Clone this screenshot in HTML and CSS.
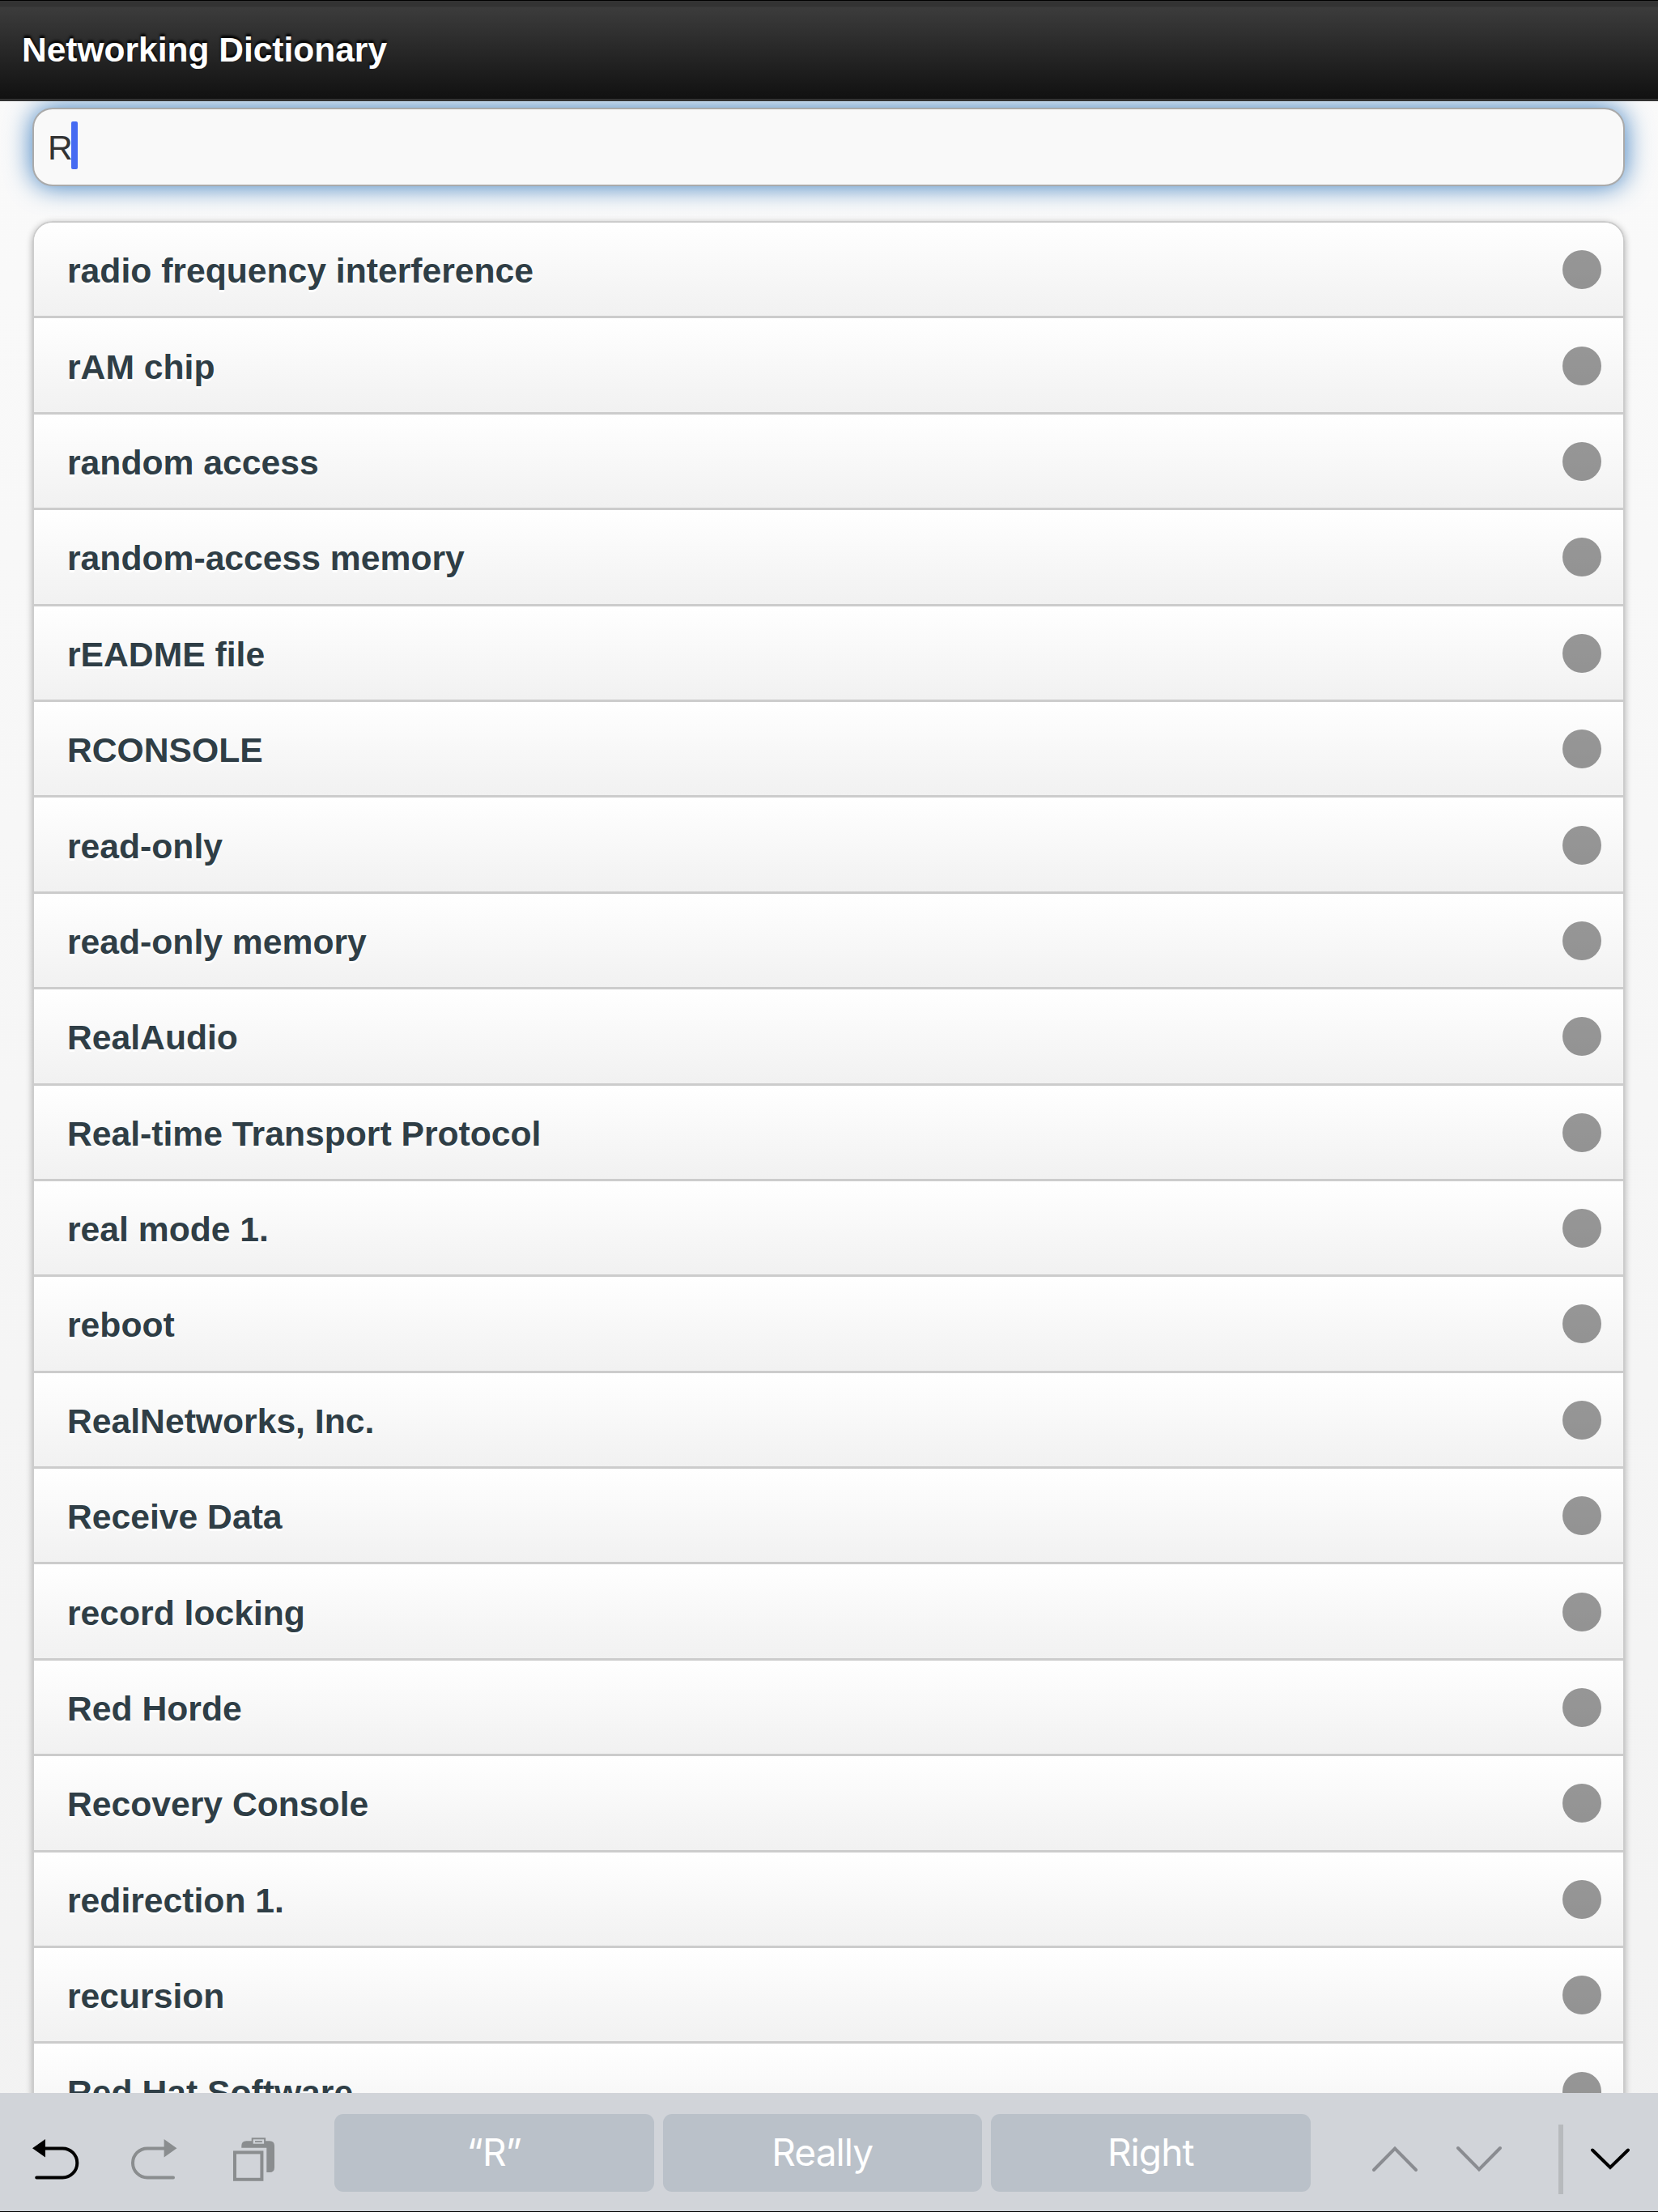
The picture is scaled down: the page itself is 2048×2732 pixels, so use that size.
FILE: index.html
```html
<!DOCTYPE html>
<html lang="en">
<head>
    <meta charset="UTF-8">
    <meta name="viewport" content="width=device-width, initial-scale=1.0">
    <title>Networking Dictionary</title>
    <link rel="stylesheet" href="styles.css">
</head>
<body>

    <header class="header">
        <h1>Networking Dictionary</h1>
    </header>

    <main class="content">
        <div class="search"><span>R</span><i class="caret"></i></div>

        <ul class="list">
            <li><a>radio frequency interference</a><span class="dot"></span></li>
            <li><a>rAM chip</a><span class="dot"></span></li>
            <li><a>random access</a><span class="dot"></span></li>
            <li><a>random-access memory</a><span class="dot"></span></li>
            <li><a>rEADME file</a><span class="dot"></span></li>
            <li><a>RCONSOLE</a><span class="dot"></span></li>
            <li><a>read-only</a><span class="dot"></span></li>
            <li><a>read-only memory</a><span class="dot"></span></li>
            <li><a>RealAudio</a><span class="dot"></span></li>
            <li><a>Real-time Transport Protocol</a><span class="dot"></span></li>
            <li><a>real mode 1.</a><span class="dot"></span></li>
            <li><a>reboot</a><span class="dot"></span></li>
            <li><a>RealNetworks, Inc.</a><span class="dot"></span></li>
            <li><a>Receive Data</a><span class="dot"></span></li>
            <li><a>record locking</a><span class="dot"></span></li>
            <li><a>Red Horde</a><span class="dot"></span></li>
            <li><a>Recovery Console</a><span class="dot"></span></li>
            <li><a>redirection 1.</a><span class="dot"></span></li>
            <li><a>recursion</a><span class="dot"></span></li>
            <li><a>Red Hat Software</a><span class="dot"></span></li>
        </ul>
    </main>

    <footer class="toolbar">
        <div class="tools">
            <svg class="undo" width="64" height="60" viewBox="36 2636 64 60">
                <path d="M40 2653.2L56 2642v22.6z"/>
                <path d="M54 2653.4h23.3a18 18 0 0 1 0 36H45.2" fill="none" stroke="#000" stroke-width="4" stroke-linecap="round"/>
            </svg>
            <svg class="redo" width="64" height="60" viewBox="159 2636 64 60">
                <path d="M218.4 2653.2L202.6 2642v22.6z" fill="#8a8d8f"/>
                <path d="M203 2653.4h-21a18 18 0 0 0 0 36h32" fill="none" stroke="#8a8d8f" stroke-width="4" stroke-linecap="round"/>
            </svg>
            <svg class="paste" width="60" height="60" viewBox="284 2636 60 60">
                <path d="M298.3 2652.7v-2.4q0-6 6-6h28.7q6 0 6 6v26.7q0 6-6 6h-3.7v-30.3z" fill="#8a8d8f"/>
                <rect x="311.7" y="2641.3" width="15.4" height="7.4" fill="#d1d4d9" stroke="#8a8d8f" stroke-width="2"/>
                <rect x="315" y="2644.2" width="8.8" height="1.8" fill="#8a8d8f"/>
                <rect x="290" y="2658.4" width="33.4" height="33.4" fill="none" stroke="#8a8d8f" stroke-width="4"/>
            </svg>
        </div>

        <div class="suggestions">
            <button type="button">“R”</button>
            <button type="button">Really</button>
            <button type="button">Right</button>
        </div>

        <div class="nav">
            <svg width="60" height="36" viewBox="0 0 60 36">
                <path d="M4 31L30 4.500L56 31" fill="none" stroke="#8a8c91" stroke-width="4" stroke-linecap="round"/>
            </svg>
            <svg width="60" height="36" viewBox="0 0 60 36">
                <path d="M4 4L30 30.500L56 4" fill="none" stroke="#8a8c91" stroke-width="4" stroke-linecap="round"/>
            </svg>
            <span class="divider"></span>
            <svg width="52" height="36" viewBox="0 0 52 36">
                <path d="M4 6.500L26 28L48 6.500" fill="none" stroke="#000" stroke-width="4" stroke-linecap="round"/>
            </svg>
        </div>
    </footer>

</body>
</html>
```

FILE: styles.css
```css
* {
    box-sizing: border-box;
}

body {
    display: flex;
    flex-direction: column;
    height: 2732px;
    margin: 0;
    overflow: hidden;
    font-family: "Liberation Sans", Helvetica, Arial, sans-serif;
    font-size: 42.67px;
    color: #333;
    background: linear-gradient(#fafafa, #f2f2f2);
}

.header {
    flex: none;
    height: 124.5px;
    padding-left: 27px;
    border-top: 1px solid #000;
    border-bottom: 3px solid #333;
    background: linear-gradient(#333 7px, #3c3c3c 8px, #111);
    position: relative;
    z-index: 1;
}

.header h1 {
    margin: 0;
    font-size: 42.5px;
    line-height: 122px;
    color: #fff;
    text-shadow: 0 -3px 3px #000;
}

.content {
    flex: 1;
    min-height: 0;
    padding: 8.5px 41px 0 40px;
    overflow: hidden;
}

.search {
    display: flex;
    align-items: center;
    height: 97px;
    padding: 2px 0 0 17px;
    border: 2.67px solid #aaa;
    border-radius: 25px;
    background: #f9f9f9;
    box-shadow: 0 0 32px #387bbe;
}

.caret {
    width: 8px;
    height: 59px;
    margin: -6px 0 0 -2px;
    border-radius: 2px;
    background: #466bf2;
}

.list {
    margin: 43px 0 0;
    padding: 0;
    list-style: none;
    border: 2.67px solid #ccc;
    border-radius: 25px;
    box-shadow: 0 2.67px 8px rgba(0, 0, 0, .3);
    overflow: hidden;
}

.list li {
    display: flex;
    align-items: center;
    justify-content: space-between;
    height: 118.4px;
    padding: 1px 27px 0 41px;
    border-bottom: 3px solid #ccc;
    background: linear-gradient(#fff, #f1f1f1);
    font-weight: bold;
    color: #2f3e46;
    text-shadow: 0 2.67px 0 #fff;
}

.list a {
    padding-top: 3px;
}

.dot {
    width: 48px;
    height: 48px;
    border-radius: 50%;
    background: rgba(0, 0, 0, .4);
}

.toolbar {
    flex: none;
    display: flex;
    height: 147px;
    border-bottom: 1px solid #000;
    background: #d1d4d9;
    position: relative;
    z-index: 1;
}

.tools {
    display: flex;
    width: 413px;
    padding: 51px 0 0 36px;
}

.redo {
    margin-left: 59px;
}

.paste {
    margin-left: 61px;
}

.suggestions {
    display: flex;
    gap: 11px;
    padding-top: 26px;
}

.suggestions button {
    width: 394.5px;
    height: 96px;
    padding: 0 0 2px;
    border: 0;
    border-radius: 11px;
    background: #bac1c9;
    color: #fff;
    font: 400 46px Inter, sans-serif;
    letter-spacing: -.9px;
}

.nav {
    display: flex;
    align-items: center;
    padding: 18px 0 0 74px;
}

.nav svg + svg {
    margin-left: 44px;
}

.divider {
    width: 6px;
    height: 86px;
    margin: 0 32px 0 68px;
    background: #b7babd;
}
```
